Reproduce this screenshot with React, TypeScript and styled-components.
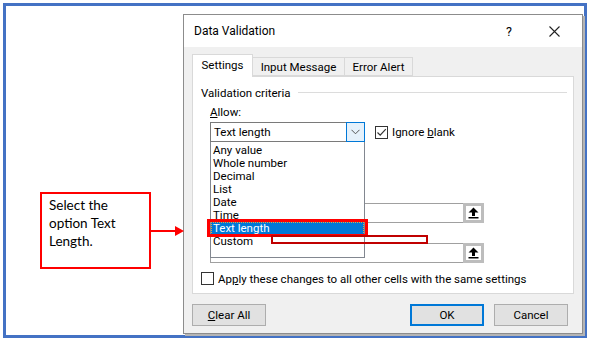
import styled, { createGlobalStyle } from 'styled-components'

const GlobalStyle = createGlobalStyle`
  html, body {
    margin: 0;
    padding: 0;
    background: #ffffff;
  }
  body {
    font-family: Roboto, 'Liberation Sans', sans-serif;
  }
`

const ui = `Roboto, 'Liberation Sans', sans-serif`

const options = ['Any value', 'Whole number', 'Decimal', 'List', 'Date', 'Time', 'Text length', 'Custom']

export default function App() {
  return (
    <>
      <GlobalStyle />
      <Frame>
        <CalloutWrap>
          <Callout>Select the option Text Length.</Callout>
          <Arrow width="34" height="12" viewBox="0 0 34 12">
            <line x1="0" y1="6" x2="26" y2="6" stroke="#ff0000" strokeWidth="2" />
            <polygon points="24,1 33,6 24,11" fill="#ff0000" />
          </Arrow>
        </CalloutWrap>

        <Dialog>
          <TitleBar>
            <Title>Data Validation</Title>
            <TitleActions>
              <Help>?</Help>
              <svg width="11" height="11" viewBox="0 0 11 11">
                <path d="M0.5 0.5 L10.5 10.5 M10.5 0.5 L0.5 10.5" stroke="#222" strokeWidth="1.1" />
              </svg>
            </TitleActions>
          </TitleBar>

          <Body>
            <TabRow>
              <Tab $active $w={61}>Settings</Tab>
              <Tab $w={92}>Input Message</Tab>
              <Tab $w={68}>Error Alert</Tab>
            </TabRow>

            <Panel>
              <Section>
                <SectionTitle>Validation criteria</SectionTitle>
                <Rule />
              </Section>

              <Criteria>
                <Label>
                  <u>A</u>llow:
                </Label>
                <AllowRow>
                  <ComboWrap>
                    <Combo>
                      <ComboText>Text length</ComboText>
                      <ComboButton>
                        <svg width="9" height="6" viewBox="0 0 9 6">
                          <polyline points="0.5,0.8 4.5,4.8 8.5,0.8" fill="none" stroke="#555" strokeWidth="1" />
                        </svg>
                      </ComboButton>
                    </Combo>
                    <List>
                      {options.map((o) => (
                        <Item key={o} $selected={o === 'Text length'}>
                          {o}
                        </Item>
                      ))}
                    </List>
                    <Highlight />
                    <Mark />
                  </ComboWrap>
                  <Check>
                    <Box>
                      <svg width="11" height="11" viewBox="0 0 11 11">
                        <polyline points="1.5,5.5 4.2,8.2 9.8,2.2" fill="none" stroke="#333" strokeWidth="1.2" />
                      </svg>
                    </Box>
                    <span>
                      Ignore <u>b</u>lank
                    </span>
                  </Check>
                </AllowRow>

                <FieldRow $top={61}>
                  <Field />
                  <RefButton>
                    <UpIcon />
                  </RefButton>
                </FieldRow>
                <FieldRow $top={20}>
                  <Field />
                  <RefButton>
                    <UpIcon />
                  </RefButton>
                </FieldRow>
              </Criteria>

              <ApplyRow>
                <Box />
                <span>
                  Ap<u>p</u>ly these changes to all other cells with the same settings
                </span>
              </ApplyRow>
            </Panel>

            <Footer>
              <Button>
                <u>C</u>lear All
              </Button>
              <FooterRight>
                <Button $primary>OK</Button>
                <Button>Cancel</Button>
              </FooterRight>
            </Footer>
          </Body>
        </Dialog>
      </Frame>
    </>
  )
}

const UpIcon = () => (
  <svg width="11" height="12" viewBox="0 0 11 12">
    <polygon points="5.5,0.5 10.5,5.5 7,5.5 7,9 4,9 4,5.5 0.5,5.5" fill="#000" />
    <rect x="0.5" y="10" width="10" height="1.5" fill="#000" />
  </svg>
)

const Frame = styled.div`
  margin: 3px;
  border: 3px solid #4472c4;
  display: flex;
  align-items: flex-start;
  padding: 8px 0 0 34px;
  box-sizing: content-box;
  width: 544px;
  height: 321px;
`

const CalloutWrap = styled.div`
  display: flex;
  align-items: center;
  margin-top: 178px;
`

const Callout = styled.div`
  width: 93px;
  height: 71px;
  border: 2px solid #ff0000;
  padding: 2px 7px 0 7px;
  font-family: Lato, 'Liberation Sans', sans-serif;
  font-size: 13.5px;
  line-height: 18px;
  color: #000;
`

const Arrow = styled.svg`
  display: block;
  margin-right: -2px;
  position: relative;
  z-index: 2;
`

const Dialog = styled.div`
  width: 398px;
  height: 318px;
  border: 1px solid #8c8c8c;
  box-shadow: 2px 2px 0 #b4b4b4;
  background: #f0f0f0;
  display: flex;
  flex-direction: column;
  font-family: ${ui};
  font-size: 11.5px;
  color: #000;
`

const TitleBar = styled.div`
  height: 32px;
  background: #ffffff;
  display: flex;
  align-items: center;
  justify-content: space-between;
  padding: 0 22px 0 10px;
`

const Title = styled.span`
  font-size: 12px;
`

const TitleActions = styled.div`
  display: flex;
  align-items: center;
  gap: 37px;
`

const Help = styled.span`
  font-size: 12.5px;
`

const Body = styled.div`
  flex: 1;
  display: flex;
  flex-direction: column;
  padding: 7px 8px 7px 8px;
`

const TabRow = styled.div`
  display: flex;
  align-items: flex-end;
  height: 22px;
  position: relative;
  z-index: 1;
`

const Tab = styled.div<{ $active?: boolean; $w: number }>`
  width: ${(p) => p.$w}px;
  height: ${(p) => (p.$active ? 23 : 19)}px;
  margin-bottom: ${(p) => (p.$active ? -1 : 0)}px;
  box-sizing: border-box;
  border: 1px solid #d9d9d9;
  border-bottom: ${(p) => (p.$active ? 'none' : '1px solid #d9d9d9')};
  border-left: ${(p) => (p.$active ? '1px solid #d9d9d9' : 'none')};
  background: ${(p) => (p.$active ? '#ffffff' : '#f0f0f0')};
  display: flex;
  align-items: center;
  justify-content: center;
  padding-bottom: ${(p) => (p.$active ? 2 : 0)}px;
`

const Panel = styled.div`
  height: 218px;
  box-sizing: border-box;
  border: 1px solid #d9d9d9;
  background: #ffffff;
  padding: 8px 6px 0 8px;
`

const Section = styled.div`
  display: flex;
  align-items: center;
  gap: 7px;
  height: 15px;
`

const SectionTitle = styled.span`
  white-space: nowrap;
`

const Rule = styled.div`
  flex: 1;
  height: 1px;
  background: #dcdcdc;
`

const Criteria = styled.div`
  margin-left: 9px;
`

const Label = styled.div`
  margin-top: 5px;
  height: 15px;
  line-height: 15px;
`

const AllowRow = styled.div`
  display: flex;
  align-items: center;
  gap: 10px;
  margin-top: 2px;
`

const ComboWrap = styled.div`
  position: relative;
`

const Combo = styled.div`
  width: 155px;
  height: 20px;
  box-sizing: border-box;
  border: 1px solid #7a7a7a;
  display: flex;
  align-items: stretch;
`

const ComboText = styled.span`
  flex: 1;
  padding-left: 3px;
  line-height: 18px;
`

const ComboButton = styled.span`
  width: 17px;
  margin: -1px -1px -1px 0;
  border: 1px solid #0078d7;
  background: #e5f1fb;
  display: flex;
  align-items: center;
  justify-content: center;
`

const List = styled.div`
  position: absolute;
  left: 0;
  top: 20px;
  width: 155px;
  height: 116px;
  box-sizing: border-box;
  border: 1px solid #828790;
  border-top: none;
  background: #ffffff;
  padding-top: 2px;
  z-index: 3;
`

const Item = styled.div<{ $selected?: boolean }>`
  height: 13px;
  line-height: 13px;
  padding-left: 2px;
  box-sizing: border-box;
  overflow: hidden;
  background: ${(p) => (p.$selected ? '#0078d7' : 'transparent')};
  color: ${(p) => (p.$selected ? '#ffffff' : '#000')};
  outline: ${(p) => (p.$selected ? '1px dotted #e8a33d' : 'none')};
  outline-offset: -1px;
`

const Highlight = styled.div`
  position: absolute;
  left: -3px;
  top: 97px;
  width: 161px;
  height: 18px;
  box-sizing: border-box;
  border: 3px solid #ff0000;
  z-index: 4;
`

const Mark = styled.div`
  position: absolute;
  left: 61px;
  top: 113px;
  width: 157px;
  height: 9px;
  box-sizing: border-box;
  border: 2px solid #c00000;
  z-index: 4;
`

const Check = styled.label`
  display: flex;
  align-items: center;
  gap: 4px;
`

const Box = styled.span`
  width: 13px;
  height: 13px;
  flex-shrink: 0;
  box-sizing: border-box;
  border: 1px solid #333;
  background: #fff;
  display: inline-flex;
  align-items: center;
  justify-content: center;
`

const FieldRow = styled.div<{ $top: number }>`
  display: flex;
  margin-top: ${(p) => p.$top}px;
  height: 20px;
`

const Field = styled.div`
  width: 253px;
  box-sizing: border-box;
  border: 1px solid #a0a0a0;
  border-right: none;
  background: #fff;
`

const RefButton = styled.div`
  width: 21px;
  box-sizing: border-box;
  border: 3px solid #bdbdbd;
  background: #fff;
  display: flex;
  align-items: center;
  justify-content: center;
`

const ApplyRow = styled.div`
  display: flex;
  align-items: center;
  gap: 4px;
  height: 13px;
  margin-top: 9px;
`

const Footer = styled.div`
  display: flex;
  justify-content: space-between;
  margin-top: 10px;
`

const FooterRight = styled.div`
  display: flex;
  gap: 10px;
  margin-right: 6px;
`

const Button = styled.button<{ $primary?: boolean }>`
  width: 74px;
  height: 22px;
  box-sizing: border-box;
  border: ${(p) => (p.$primary ? '2px solid #0078d7' : '1px solid #adadad')};
  background: #e1e1e1;
  font-family: ${ui};
  font-size: 11.5px;
  color: #000;
  padding: 0;
`
